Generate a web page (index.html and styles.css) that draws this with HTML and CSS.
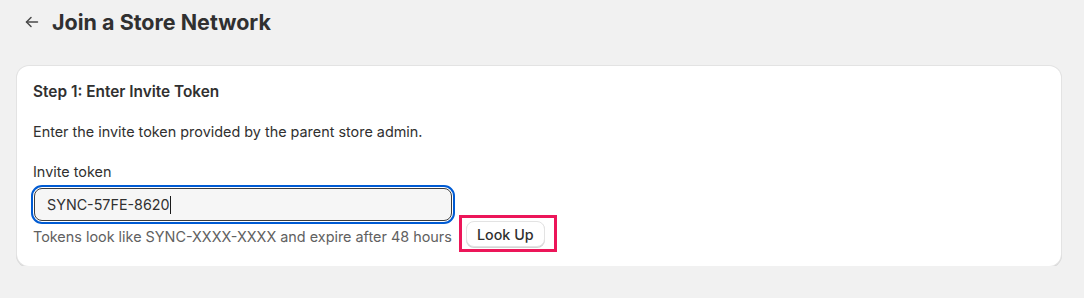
FILE: index.html
```html
<!DOCTYPE html>
<html lang="en">
<head>
  <meta charset="UTF-8">
  <meta name="viewport" content="width=device-width, initial-scale=1.0">
  <title>Join a Store Network</title>
  <link rel="stylesheet" href="styles.css">
</head>
<body>

  <div class="page">
    <div class="page-header">
      <a class="back-btn" href="#" aria-label="Back">
        <svg width="20" height="20" viewBox="0 0 20 20" fill="none" stroke="#4a4a4a" stroke-width="1.5" stroke-linecap="round" stroke-linejoin="round">
          <path d="M15.5 10H4.5"/>
          <path d="M9 5.5L4.5 10L9 14.5"/>
        </svg>
      </a>
      <h1 class="page-title">Join a Store Network</h1>
    </div>

    <div class="card">
      <h2 class="card-title">Step 1: Enter Invite Token</h2>
      <p class="card-text">Enter the invite token provided by the parent store admin.</p>

      <label class="field-label">Invite token</label>
      <div class="field">
        <span class="field-value">SYNC-57FE-8620</span><span class="caret"></span>
      </div>

      <div class="help-row">
        <span class="help-text">Tokens look like SYNC-XXXX-XXXX and expire after 48 hours</span>
        <button class="btn">Look Up</button>
      </div>
    </div>
  </div>

</body>
</html>
```

FILE: styles.css
```css
body {
    margin: 0;
    background-color: #f1f1f1;
    font-family: Inter, "Noto Sans", sans-serif;
    color: #303030;
}

.page {
    padding: 8px 23px 0 18px;
}

.page-header {
    display: flex;
    align-items: center;
    gap: 6px;
    height: 28px;
}

.back-btn {
    display: flex;
    align-items: center;
    justify-content: center;
    width: 28px;
    height: 28px;
    border-radius: 8px;
}

.page-title {
    margin: 0;
    font-size: 21.5px;
    line-height: 28px;
    font-weight: 700;
    color: #303030;
}

.card {
    margin: 30px 0 0 -1px;
    background-color: white;
    border-radius: 12px;
    padding: 16px 16px 19px;
    box-shadow: 0 0 0 1px #e3e3e3, 0 1px 0 1px #d6d6d6;
}

.card-title {
    margin: 0;
    font-size: 15.4px;
    line-height: 20px;
    font-weight: 600;
}

.card-text {
    margin: 20px 0 0;
    font-size: 14.4px;
    line-height: 20px;
}

.field-label {
    display: block;
    margin-top: 20px;
    font-size: 14.4px;
    line-height: 20px;
}

.field {
    display: flex;
    align-items: center;
    box-sizing: border-box;
    width: 418px;
    height: 33px;
    margin: 6px 0 0 1px;
    padding: 0 12px;
    background-color: #f6f6f6;
    border: 1px solid #3d3d3d;
    border-radius: 8px;
    outline: 2px solid #005bd3;
    outline-offset: 1px;
    font-size: 14.3px;
}

.caret {
    width: 1px;
    height: 18px;
    background-color: #1a1a1a;
}

.help-row {
    display: flex;
    align-items: flex-end;
    gap: 14px;
    margin-top: 0;
}

.help-text {
    font-size: 14.4px;
    line-height: 20px;
    color: #616161;
}

.btn {
    position: relative;
    height: 26px;
    width: 79px;
    padding: 0 8px;
    background-color: white;
    border: 1px solid #e3e3e3;
    border-radius: 8px;
    box-shadow: 0 1px 0 #d4d4d4;
    font-family: Inter, "Noto Sans", sans-serif;
    font-size: 14.3px;
    font-weight: 500;
    color: #303030;
}

/* highlight box around the action */
.btn::after {
    content: "";
    position: absolute;
    top: -7px;
    left: -8px;
    right: -13px;
    bottom: -6px;
    border: 3px solid #ec1659;
}
```
